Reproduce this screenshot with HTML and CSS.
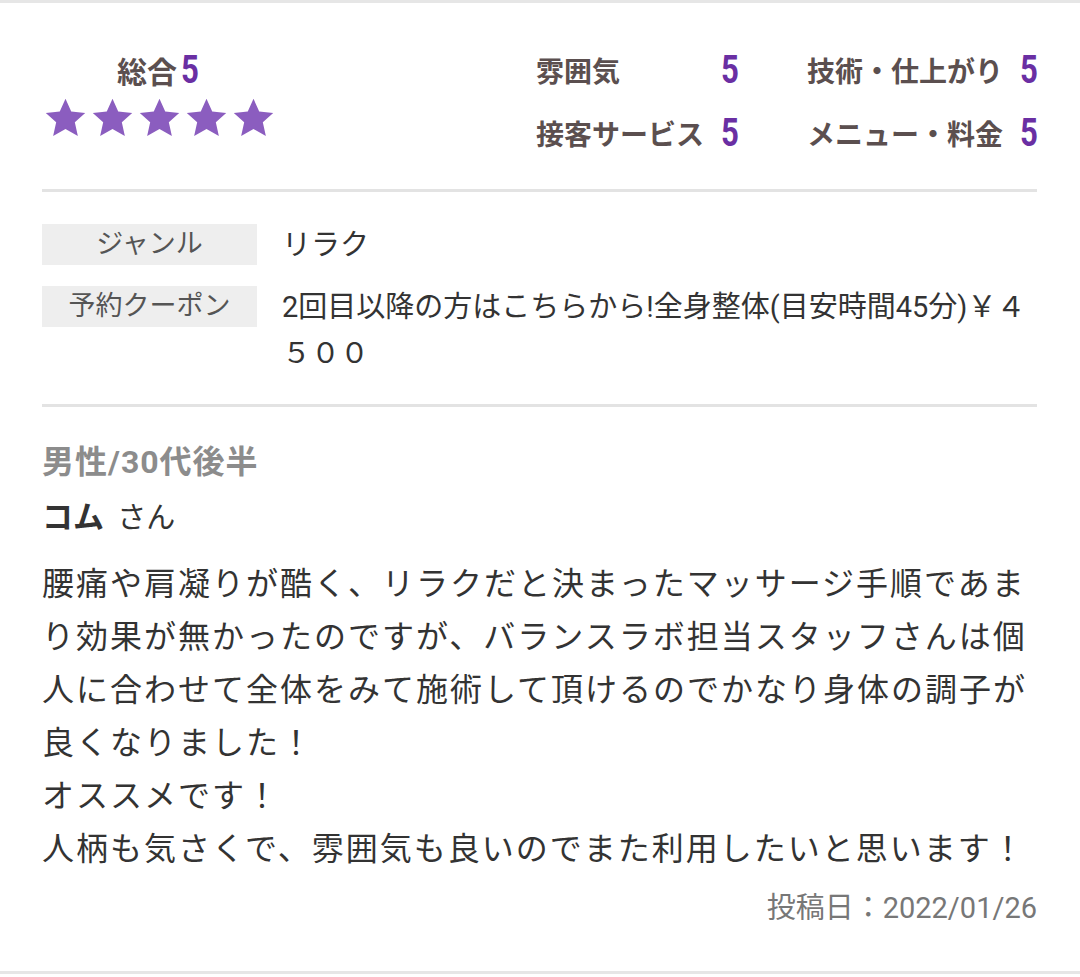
FILE: index.html
```html
<!DOCTYPE html>
<html lang="ja">
<head>
    <meta charset="UTF-8">
    <meta name="viewport" content="width=device-width, initial-scale=1.0">
    <title>口コミ</title>
    <link rel="stylesheet" href="styles.css">
</head>
<body>
    <div class="review">
        <div class="summary">
            <div class="total">
                <div class="total-title">総合<span class="num">5</span></div>
                <div class="stars">
                    <svg viewBox="0 0 24 24"><path d="M12 1l3.2 7.1 7.8.8-5.8 5.2 1.7 7.7L12 17.9l-6.9 3.9 1.7-7.7L1 8.9l7.8-.8z"/></svg>
                    <svg viewBox="0 0 24 24"><path d="M12 1l3.2 7.1 7.8.8-5.8 5.2 1.7 7.7L12 17.9l-6.9 3.9 1.7-7.7L1 8.9l7.8-.8z"/></svg>
                    <svg viewBox="0 0 24 24"><path d="M12 1l3.2 7.1 7.8.8-5.8 5.2 1.7 7.7L12 17.9l-6.9 3.9 1.7-7.7L1 8.9l7.8-.8z"/></svg>
                    <svg viewBox="0 0 24 24"><path d="M12 1l3.2 7.1 7.8.8-5.8 5.2 1.7 7.7L12 17.9l-6.9 3.9 1.7-7.7L1 8.9l7.8-.8z"/></svg>
                    <svg viewBox="0 0 24 24"><path d="M12 1l3.2 7.1 7.8.8-5.8 5.2 1.7 7.7L12 17.9l-6.9 3.9 1.7-7.7L1 8.9l7.8-.8z"/></svg>
                </div>
            </div>
            <div class="scores">
                <div class="score-label">雰囲気</div>
                <div class="score-num"><span class="num">5</span></div>
                <div class="score-label second">技術・仕上がり</div>
                <div class="score-num"><span class="num">5</span></div>
                <div class="score-label">接客サービス</div>
                <div class="score-num"><span class="num">5</span></div>
                <div class="score-label second">メニュー・料金</div>
                <div class="score-num"><span class="num">5</span></div>
            </div>
        </div>

        <div class="info">
            <div class="info-row">
                <div class="info-label">ジャンル</div>
                <div class="info-value">リラク</div>
            </div>
            <div class="info-row">
                <div class="info-label">予約クーポン</div>
                <div class="info-value">2回目以降の方はこちらから!全身整体(目安時間45分)￥４５００</div>
            </div>
        </div>

        <div class="comment">
            <div class="profile">男性/30代後半</div>
            <div class="name"><strong>コム</strong> さん</div>
            <p class="body">腰痛や肩凝りが酷く、リラクだと決まったマッサージ手順であまり効果が無かったのですが、バランスラボ担当スタッフさんは個人に合わせて全体をみて施術して頂けるのでかなり身体の調子が良くなりました！<br>オススメです！<br>人柄も気さくで、雰囲気も良いのでまた利用したいと思います！</p>
            <div class="date">投稿日：2022/01/26</div>
        </div>
    </div>
</body>
</html>
```

FILE: styles.css
```css
body {
    margin: 0;
    background: #fff;
    font-family: Roboto, "Noto Sans CJK JP", sans-serif;
    color: #333;
}
.review {
    border-top: 3px solid #e6e6e6;
    border-bottom: 3px solid #e6e6e6;
    padding: 0 43px 0 42px;
}
.num {
    display: inline-block;
    color: #6a2fa3;
    font-family: Roboto, sans-serif;
    font-weight: 700;
    transform: scaleX(0.82);
}

/* summary */
.summary {
    display: flex;
    align-items: flex-start;
    padding: 35px 0 25px;
    border-bottom: 3px solid #e3e3e3;
}
.total {
    width: 234px;
    padding-top: 12px;
    text-align: center;
}
.total-title {
    height: 40px;
    line-height: 40px;
    font-size: 30px;
    font-weight: 700;
    color: #5b4f4f;
}
.total-title .num {
    font-size: 38px;
    margin-left: 2px;
}
.stars {
    display: flex;
    justify-content: center;
    gap: 4px;
    margin-top: 7px;
}
.stars svg {
    width: 43px;
    height: 43px;
    fill: #8b5dbf;
}
.scores {
    margin-left: auto;
    display: grid;
    grid-template-columns: auto 19px auto 19px;
    grid-auto-rows: 63px;
    column-gap: 15px;
    align-items: center;
}
.score-label {
    font-size: 28px;
    font-weight: 700;
    color: #5b4f4f;
}
.score-label.second {
    margin-left: 54px;
}
.score-num {
    text-align: center;
}
.score-num .num {
    font-size: 38px;
    line-height: 40px;
}

/* info table */
.info {
    padding: 32px 0 28px;
    border-bottom: 3px solid #e3e3e3;
}
.info-row {
    display: flex;
    align-items: flex-start;
    gap: 25px;
}
.info-row + .info-row {
    margin-top: 18px;
}
.info-label {
    flex: 0 0 215px;
    height: 41px;
    line-height: 41px;
    background: #eeeeee;
    text-align: center;
    font-size: 27px;
    color: #555;
}
.info-value {
    font-size: 29px;
    line-height: 46px;
    margin-top: -2px;
    color: #333;
}

/* comment */
.comment {
    padding: 35px 0 45px;
}
.profile {
    font-size: 32px;
    line-height: 40px;
    font-weight: 700;
    color: #8c8c8c;
    letter-spacing: 1px;
}
.name {
    margin-top: 16px;
    font-size: 29px;
    line-height: 40px;
    color: #333;
}
.name strong {
    font-size: 31px;
    font-weight: 700;
    margin-right: 6px;
}
.body {
    margin: 20px 0 0;
    font-size: 32px;
    line-height: 53px;
    letter-spacing: 2px;
    color: #333;
}
.date {
    margin-top: 14px;
    text-align: right;
    font-size: 29px;
    line-height: 36px;
    color: #777;
}
```
